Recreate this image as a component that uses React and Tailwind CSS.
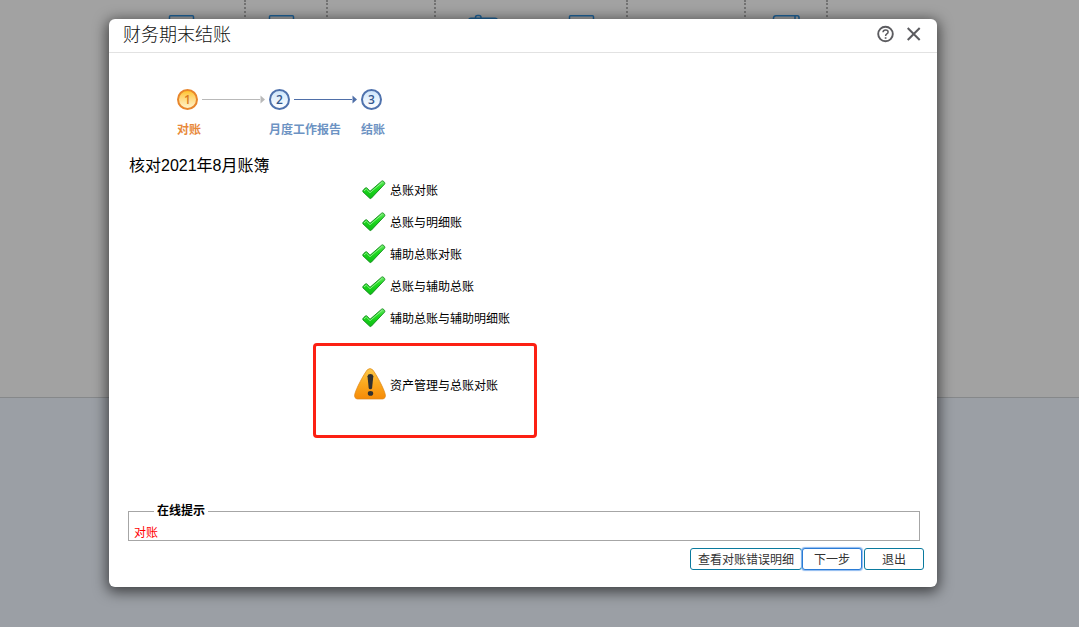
import React from "react";

const CHECKS = ["总账对账", "总账与明细账", "辅助总账对账", "总账与辅助总账", "辅助总账与辅助明细账"];

const BACKGROUND_CELLS = [
  { id: "a", className: "w-[246px] pl-[168px]", icons: ["sheet"] },
  { id: "b", className: "w-[82px] pl-[22px]", icons: ["sheet"] },
  { id: "c", className: "w-[108px]", icons: [] },
  { id: "d", className: "w-[192px] pl-[32px]", icons: ["case", "sheet"] },
  { id: "e", className: "w-[118px]", icons: [] },
  { id: "f", className: "w-[82px] pl-[26px]", icons: ["book"] },
];

function ModuleIcon({ kind }) {
  return (
    <svg className="h-8 w-[30px] shrink-0" viewBox="0 0 30 32" fill="none" stroke="#1f6196" strokeWidth="1.5" aria-hidden="true">
      {kind === "case" && (
        <>
          <path d="M7.500 5V3.500a2 2 0 0 1 2-2h1.500a2 2 0 0 1 2 2V5" />
          <rect x="1" y="4.500" width="28" height="22" rx="2" strokeWidth="2" />
        </>
      )}
      {kind === "sheet" && <rect x="1.500" y="1.700" width="24" height="28" rx="1" />}
      {kind === "book" && (
        <>
          <path d="M1.500 30V4a2.500 2.500 0 0 1 2.500-2.300h21.500q1.500 0 1.500 2V30z" />
          <path d="M23 2v28" />
        </>
      )}
    </svg>
  );
}

function CheckIcon() {
  return (
    <svg className="h-5 w-6 shrink-0" viewBox="0 0 24 20" aria-hidden="true">
      <defs>
        <linearGradient id="tickFill" x1="0" y1="0" x2="0" y2="1">
          <stop offset="0" stopColor="#6be868" />
          <stop offset="0.400" stopColor="#1fdc1f" />
          <stop offset="1" stopColor="#0cbd14" />
        </linearGradient>
      </defs>
      <path
        d="M.9 10.600 3.400 7.900Q4.300 7.400 5.200 8.200L8 11.300 19.600 1.200Q20.800 .4 21.700 1.400L22.700 2.700Q23.100 3.400 22.500 4.200L9.300 18.200Q8.500 18.900 7.700 18.200L1 11.900Q.5 11.200.9 10.600Z"
        fill="url(#tickFill)"
        stroke="#138a1b"
        strokeWidth="0.900"
      />
      <path d="M2 11 4.300 9 8 12.700 20.600 2" fill="none" stroke="#a5f3a0" strokeWidth="0.800" />
    </svg>
  );
}

function WarningIcon() {
  return (
    <svg className="size-8 shrink-0" viewBox="0 0 32 32" aria-hidden="true">
      <defs>
        <linearGradient id="warnFill" x1="0" y1="0" x2="0" y2="1">
          <stop offset="0" stopColor="#fbc94a" />
          <stop offset="0.500" stopColor="#fba81d" />
          <stop offset="1" stopColor="#f68b08" />
        </linearGradient>
      </defs>
      <path
        d="M13.300 1.800Q16-.7 18.700 1.800C22 6 30 20.500 31.300 26.500Q32 30.500 28.500 31H3.500Q0 30.500.7 26.500C2 20.500 10 6 13.300 1.800Z"
        fill="url(#warnFill)"
        stroke="#de861a"
        strokeWidth="0.700"
      />
      <path d="M13.500 8.200Q13.700 6.100 16.400 6.100T19.300 8.200L18.100 20Q17.900 21.300 16.400 21.300T14.700 20Z" fill="#303030" />
      <ellipse cx="16.500" cy="25.400" rx="2.700" ry="2.300" fill="#303030" />
    </svg>
  );
}

function HelpIcon() {
  return (
    <svg className="size-[18px]" viewBox="0 0 18 18" fill="none" stroke="#5c5c60" strokeWidth="1.900" aria-hidden="true">
      <circle cx="8.500" cy="9" r="7.300" />
      <path d="M6 7.300Q6.100 4.900 8.600 4.900T11.100 7Q11.100 8.100 9.800 8.900T8.600 11" strokeWidth="1.500" />
      <path d="M8.600 12.200v1.600" strokeWidth="1.700" />
    </svg>
  );
}

function CloseIcon() {
  return (
    <svg className="size-[14px]" viewBox="0 0 14 14" fill="none" stroke="#5c5c60" strokeWidth="2" aria-hidden="true">
      <path d="M.7 1l12 12M12.700 1L.7 13" />
    </svg>
  );
}

function Arrow({ className }) {
  return (
    <svg className={`h-[9px] w-[63px] shrink-0 ${className}`} viewBox="0 0 63 9" aria-hidden="true">
      <path d="M0 4h59v1H0zM58.500 .5v8l4.500-4z" fill="currentColor" />
    </svg>
  );
}

function Step({ number, label, active, arrow }) {
  return (
    <li className="w-[92px] shrink-0" aria-current={active ? "step" : undefined}>
      <div className="flex h-[21px] items-center gap-1">
        <span
          className={
            active
              ? "flex size-[21px] shrink-0 items-center justify-center rounded-full border-2 border-[#e8862c] bg-linear-to-b from-[#ffc423] to-[#fff3c9] font-['Open_Sans'] text-xs font-semibold text-[#d97b1c]"
              : "flex size-[21px] shrink-0 items-center justify-center rounded-full border-2 border-[#4f72ad] bg-linear-to-b from-[#cfe6fb] to-white font-['Open_Sans'] text-xs font-semibold text-[#34568c]"
          }
        >
          {number}
        </span>
        {arrow && <Arrow className={arrow} />}
      </div>
      <span
        className={
          active
            ? "mt-3 block text-xs leading-4 font-bold whitespace-nowrap text-[#e8893a]"
            : "mt-3 block text-xs leading-4 font-bold whitespace-nowrap text-[#6d93c3]"
        }
      >
        {label}
      </span>
    </li>
  );
}

export default function App() {
  return (
    <div className="relative flex min-h-screen flex-col bg-[#9b9fa5] font-['Liberation_Sans','Noto_Sans_CJK_SC',sans-serif] text-black">
      <div className="absolute inset-0 overflow-hidden" aria-hidden="true">
        <div className="flex h-[398px] border-b border-[#86888a] bg-[#a2a2a2]">
          {BACKGROUND_CELLS.map((cell) => (
            <div
              key={cell.id}
              className={`flex shrink-0 gap-[70px] border-r-2 border-dotted border-[#727272] pt-[14px] ${cell.className}`}
            >
              {cell.icons.map((kind) => (
                <ModuleIcon key={kind} kind={kind} />
              ))}
            </div>
          ))}
        </div>
      </div>

      <section
        role="dialog"
        aria-labelledby="dialog-title"
        className="relative mt-[19px] mr-[142px] mb-10 ml-[109px] rounded-md bg-white shadow-[0_3px_14px_2px_rgba(0,0,0,0.6)]"
      >
        <header className="flex h-[34px] items-center justify-between border-b border-[#e2e2e2] pr-4 pb-[3px] pl-[14px]">
          <h1 id="dialog-title" className="pt-px text-lg leading-6 font-light text-[#111]">
            财务期末结账
          </h1>
          <div className="flex items-center gap-3">
            <button type="button" aria-label="帮助">
              <HelpIcon />
            </button>
            <button type="button" aria-label="关闭">
              <CloseIcon />
            </button>
          </div>
        </header>

        <ol className="flex pt-9 pl-[68px]">
          <Step number="1" label="对账" active arrow="text-[#b9b9b9]" />
          <Step number="2" label="月度工作报告" arrow="text-[#4f6fa8]" />
          <Step number="3" label="结账" />
        </ol>

        <h2 className="mt-4 pl-5 text-base leading-6">核对2021年8月账簿</h2>

        <ul className="-mt-1 pl-[253px]">
          {CHECKS.map((label) => (
            <li key={label} className="flex h-8 items-center gap-1 text-xs">
              <CheckIcon />
              <span className="pt-0.5">{label}</span>
            </li>
          ))}
        </ul>

        <div className="mt-[9px] ml-[204px] flex h-[95px] w-[224px] items-center gap-1 rounded-sm border-3 border-[#fc2013] pb-[14px] pl-[38px] text-xs">
          <WarningIcon />
          <span className="pt-1">资产管理与总账对账</span>
        </div>

        <fieldset className="mt-[65px] mr-[17px] ml-[19px] border border-[#a6a6a6] pl-[5px]">
          <legend className="ml-5 px-[3px] text-xs leading-4 font-bold">在线提示</legend>
          <p className="pt-2 text-xs leading-[13px] text-[#f00]">对账</p>
        </fieldset>

        <footer className="flex justify-end pt-[7px] pr-[13px] pb-[17px] text-xs text-[#333]">
          <button type="button" className="h-[22px] w-28 rounded-[3px] border border-[#0a7a9e] bg-white pt-px">
            查看对账错误明细
          </button>
          <button
            type="button"
            className="h-[22px] w-[60px] rounded-[3px] border border-[#2a7bd6] bg-white pt-px shadow-[0_0_1px_1px_#8dbaf0]"
          >
            下一步
          </button>
          <button type="button" className="ml-0.5 h-[22px] w-[60px] rounded-[3px] border border-[#0a7a9e] bg-white pt-px">
            退出
          </button>
        </footer>
      </section>
    </div>
  );
}
